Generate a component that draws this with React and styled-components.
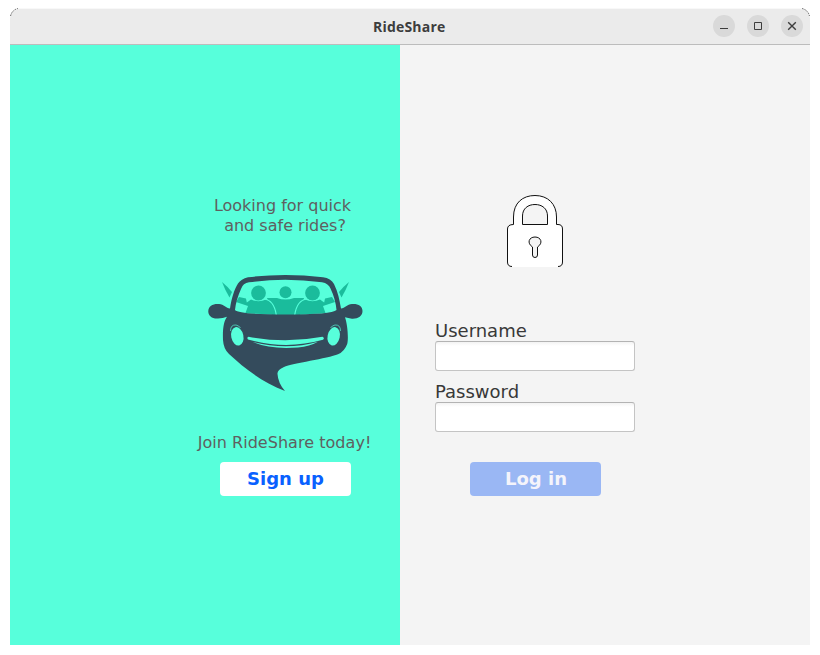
import React from 'react';
import styled, { createGlobalStyle } from 'styled-components';

const GlobalStyle = createGlobalStyle`
  * { box-sizing: border-box; }
  body { margin: 0; background: #fff; font-family: "DejaVu Sans", sans-serif; }
`;

const Desktop = styled.div`
  width: 820px;
  height: 655px;
  padding: 8px 10px 10px;
  background: #fff;
`;

const Window = styled.main`
  display: flex;
  flex-direction: column;
  height: 637px;
`;

const TitleBar = styled.header`
  position: relative;
  display: grid;
  grid-template-columns: 1fr auto 1fr;
  align-items: center;
  height: 37px;
  flex: none;
  padding: 0 7px;
  border-bottom: 1px solid #bcbcbc;
  border-top: 1px solid #f8f8f8;
  border-radius: 10px 10px 0 0;
  background: #ebebeb;
`;

const Title = styled.h1`
  grid-column: 2;
  margin: 0;
  padding-top: 1px;
  color: #3d3d3d;
  font: 700 14px/18px "Open Sans", "Noto Sans", sans-serif;
  letter-spacing: 0.2px;
  width: 74px;
  white-space: nowrap;
`;

const Corners = styled.svg`
  position: absolute;
  left: 0;
  top: -1px;
  width: 800px;
  height: 10px;
  pointer-events: none;
`;

const Controls = styled.div`
  display: flex;
  justify-content: flex-end;
  gap: 12px;
  padding-bottom: 1px;
`;

const ControlButton = styled.button`
  width: 22px;
  height: 22px;
  padding: 0;
  border: 0;
  border-radius: 50%;
  background: #d9d9d9;

  svg { display: block; width: 22px; height: 22px; }
`;

const Panels = styled.div`
  display: grid;
  grid-template-columns: 390px 410px;
  height: 600px;
`;

const JoinPanel = styled.section`
  display: flex;
  flex-direction: column;
  align-items: center;
  padding: 151px 0 0 158px;
  background: #57ffdb;
`;

const Message = styled.p`
  margin: 0;
  color: #5f6060;
  font-size: 16px;
  line-height: 20px;
  text-align: center;
  white-space: pre;
`;

const Tagline = styled(Message)`
  margin-right: 3px;
`;

const JoinMessage = styled(Message)`
  margin-top: 38px;
  margin-left: 1px;
  letter-spacing: 0.04px;
`;

const Car = styled.svg`
  width: 170px;
  height: 130px;
  margin-top: 29px;
  margin-left: 2px;
`;

const LoginPanel = styled.section`
  display: flex;
  flex-direction: column;
  align-items: flex-start;
  padding: 149px 0 0 35px;
  background: #f4f4f4;
`;

const Lock = styled.svg`
  width: 58px;
  height: 75px;
  margin-left: 71px;
`;

const Field = styled.label`
  display: block;
  margin-top: ${({ $gap }) => $gap}px;
  color: #383838;
  font-size: 18px;
  line-height: 21px;
`;

const Input = styled.input`
  display: block;
  width: 200px;
  height: 30px;
  padding: 4px 7px;
  border: 1px solid #c4c4c4;
  border-top-color: #b3b3b3;
  border-radius: 3px;
  outline: 0;
  background: linear-gradient(#f3f3f3, #fff 4px);
  font: 16px "DejaVu Sans", sans-serif;
`;

const ActionButton = styled.button`
  width: 131px;
  height: 34px;
  padding: 0;
  border: 0;
  border-radius: 4px;
  font: 700 18px/34px "DejaVu Sans", sans-serif;
`;

const SignUpButton = styled(ActionButton)`
  margin: 9px 0 0 3px;
  background: #fff;
  color: #0961ff;
`;

const LoginButton = styled(ActionButton)`
  margin: 30px 0 0 35px;
  padding-left: 1px;
  background: #9ab7f4;
  color: #f4f4fb;
`;

function CarPicture() {
  return (
    <Car viewBox="200 265 170 130" aria-label="Shared car">
      <g fill="#1abc9c">
        <path d="M222 282 Q227 286 232 292 L229.5 297.5 Q225 290 222 282Z" />
        <path d="M349 282 Q344 286 339 292 L341.5 297.5 Q346 290 349 282Z" />
        <circle cx="285.5" cy="292.3" r="6" />
        <path d="M267 298 L277 298 Q285.5 301 294 298 L304 298 300 315 272 315Z" />
        <circle cx="258.5" cy="293" r="7.4" />
        <circle cx="312.5" cy="293" r="7.4" />
        <path d="M236 302 L239 297 246 298.5 246.8 302.5 Q249 301 251 299.5 Q258.5 303 266 299.5 Q274 301 276 315 L245.5 313 248 306Z" />
        <path d="M335 302 L332 297 325 298.5 324.2 302.5 Q322 301 320 299.5 Q312.5 303 305 299.5 Q297 301 295 315 L325.5 313 323 306Z" />
      </g>
      <path d="M264 299 Q274 300 276.3 315 M307 299 Q297 300 294.7 315" fill="none" stroke="#57ffdb" strokeWidth="1.2" />
      <path
        fill="#344b5c"
        fillRule="evenodd"
        d="M208.3 311 C208.5 306 213 303.5 219 304 C224 304.5 226 308 230 308.5
          C231.5 298 234.5 289 238 283.5 Q241 279 248 277.3 Q285 272.7 323 277.3
          Q331 278.5 334 284 C338 292 339.5 300 341 308.5 C345 308 347 304.5 352 304
          C358 303.5 362.5 306 362.5 311 C362.5 316 358 319 352 318.7 Q348 318 345 317.3
          C347.5 324 348.7 339 347.2 344 Q344.5 351.5 338 354.3 C328 358.5 292 363.5 284 367
          Q277 370 277.5 374 Q278 383 285 391 C262 382 244 368 229 354
          Q223.5 349 223 340 C222.5 328 224 321 227 316.8 Q223 318.5 218 318.5
          C212 319 208 315.5 208.3 311Z
          M235 310 Q239 314.5 285 314.5 Q332 314.5 336.5 310 Q335.5 299 330.5 288.5 Q328.5 283.5 322 282.3
          Q285 277.2 249 282.3 Q243 283 241 289 Q236 300 235 310Z"
      />
      <g fill="#57ffdb">
        <ellipse cx="237.3" cy="336.3" rx="6.1" ry="9.3" transform="rotate(-12 237.3 336.3)" />
        <ellipse cx="333.7" cy="336.3" rx="6.1" ry="9.3" transform="rotate(12 333.7 336.3)" />
        <path d="M248.5 336.7 Q285 343.8 322.5 336.7 Q325 337.7 323 339.8 Q286 350.2 248 339.5 Q246.5 337.5 248.5 336.7Z" />
        <path d="M252.5 341.8 Q286 350.8 318 341.8 Q310 346.4 298 347.4 Q270 349.6 252.5 341.8Z" />
      </g>
      <path d="M230.5 331 Q230.5 324.5 236 325 Q239 325.5 240.5 328 M340.5 331 Q340.5 324.5 335 325 Q332 325.5 330.5 328" fill="none" stroke="#57ffdb" strokeWidth=".65" />
    </Car>
  );
}

function LockPicture() {
  return (
    <Lock viewBox="506 194 58 75" aria-label="Lock">
      <path
        fill="#fff"
        fillRule="evenodd"
        d="M513.5 224.5 V217 C513.5 203 522.5 195.5 535 195.5 C548 195.5 556.5 204 556.5 217 V224.5
          H558 Q562.5 224.5 562.5 229 V262 Q562.5 267 558 267 H512 Q507.5 267 507.5 262 V229 Q507.5 224.5 513.5 224.5Z
          M522.5 224.5 H547.5 V216 C547.5 208.5 542 204.5 535 204.5 C528 204.5 522.5 208.5 522.5 216Z
          M532.5 247 C526.5 243 529 237 535 237 C541 237 543.5 243 537.5 247 V255
          Q537.5 257.5 535 257.5 Q532.5 257.5 532.5 255Z"
      />
      <path
        fill="none"
        stroke="#111"
        d="M513.5 224.5 V217 C513.5 203 522.5 195.5 535 195.5 C548 195.5 556.5 204 556.5 217 V224.5
          H558 Q562.5 224.5 562.5 229 V262 Q562.5 266.5 558 266.5 M512 266.5 Q507.5 266.5 507.5 262 V229 Q507.5 224.5 513.5 224.5
          M522.5 224.5 H547.5 V216 C547.5 208.5 542 204.5 535 204.5 C528 204.5 522.5 208.5 522.5 216Z
          M532.5 247 C526.5 243 529 237 535 237 C541 237 543.5 243 537.5 247 V255
          Q537.5 257.5 535 257.5 Q532.5 257.5 532.5 255Z"
      />
    </Lock>
  );
}

function WindowControl({ label, path, weight = 1 }) {
  return (
    <ControlButton aria-label={label}>
      <svg viewBox="0 0 22 22" fill="none" stroke="#3d3d3d" strokeWidth={weight}>
        <path d={path} />
      </svg>
    </ControlButton>
  );
}

export default function App() {
  return (
    <>
      <GlobalStyle />
      <Desktop>
        <Window>
          <TitleBar>
            <Title>RideShare</Title>
            <Controls>
              <WindowControl label="Minimize" path="M7 13.5 H15" />
              <WindowControl label="Maximize" path="M7.5 7.5 H14.5 V14.5 H7.5Z" />
              <WindowControl label="Close" weight={1.4} path="M7.2 7.2 L14.8 14.8 M14.8 7.2 L7.2 14.8" />
            </Controls>
            <Corners viewBox="0 0 800 10" fill="none" stroke="#222" strokeWidth=".7" strokeDasharray="1.5 1">
              <path d="M.5 8 Q2 2 8 .5 M792 .5 Q798 2 799.5 8" />
            </Corners>
          </TitleBar>
          <Panels>
            <JoinPanel>
              <Tagline>{'Looking for quick\n and safe rides?'}</Tagline>
              <CarPicture />
              <JoinMessage>Join RideShare today!</JoinMessage>
              <SignUpButton>Sign up</SignUpButton>
            </JoinPanel>
            <LoginPanel>
              <LockPicture />
              <Field $gap={51}>
                Username
                <Input type="text" />
              </Field>
              <Field $gap={10}>
                Password
                <Input type="password" />
              </Field>
              <LoginButton>Log in</LoginButton>
            </LoginPanel>
          </Panels>
        </Window>
      </Desktop>
    </>
  );
}
